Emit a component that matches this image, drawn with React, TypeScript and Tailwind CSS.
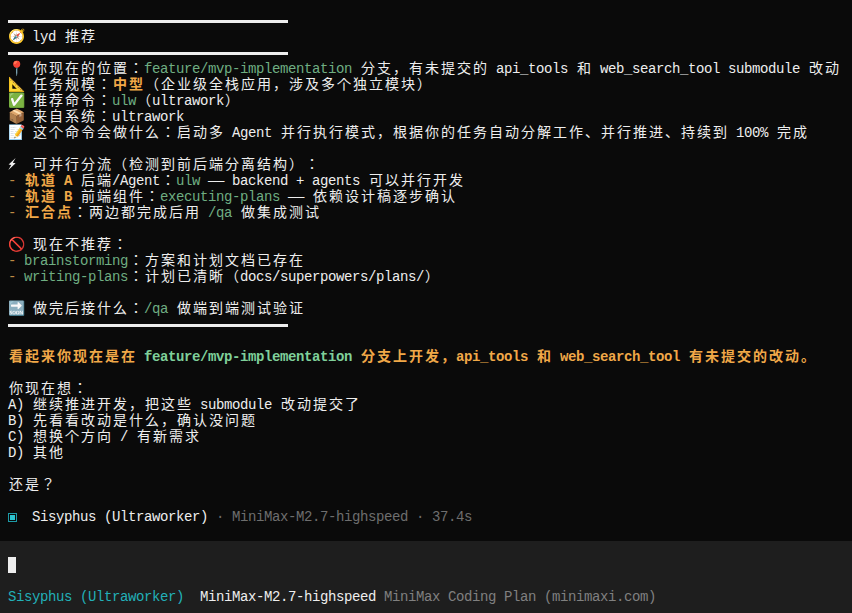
import React from "react";

type Seg = [string, string?];
const G = "text-[#6fae82]";
const O = "text-[#f0a848] font-bold";
const D = "text-[#c08a45]";
const isWide = (c: string) => {
  const p = c.codePointAt(0) || 0;
  return (p >= 0x2e80 && p <= 0x9fff) || (p >= 0xff00 && p <= 0xff60) || p >= 0x1f000 || p === 0x2705 || p === 0x3000;
};

function Text({ s }: { s: string }) {
  return (
    <>
      {Array.from(s).map((c, i) =>
        isWide(c) ? (
          <span key={i} className="inline-block w-4 text-center">{c}</span>
        ) : (
          <span key={i} className="inline-block w-2">{c === " " ? "\u00a0" : c}</span>
        )
      )}
    </>
  );
}

function Row({ segs = [], lead }: { segs?: Seg[]; lead?: React.ReactNode }) {
  return (
    <div className="flex h-4 leading-4 whitespace-nowrap">
      {lead}
      <div>
        {segs.map(([s, cls], i) => (
          <span key={i} className={cls}><Text s={s} /></span>
        ))}
      </div>
    </div>
  );
}

function Rule() {
  return (
    <div className="h-4 pt-[7px]">
      <div className="h-[3px] w-[280px] bg-[#eeeeee]" />
    </div>
  );
}

function Bolt() {
  return (
    <svg viewBox="0 0 8 12" className="w-2 h-3 mt-px shrink-0" fill="#eeeeee">
      <path d="M7.6 0 L0.6 6.4 L3.2 7 L0.4 12 L7.6 5.2 L4.8 4.8 Z" />
    </svg>
  );
}

function Square() {
  return (
    <div className="w-[9px] h-[9px] mt-1 mr-[-1px] border border-[#1c9aa6] p-px shrink-0">
      <div className="w-full h-full bg-[#2cc4d0]" />
    </div>
  );
}

type R = { segs?: Seg[]; lead?: React.ReactNode } | "rule";
const rows: R[] = [
  "rule",
  { segs: [["🧭 lyd 推荐"]] },
  "rule",
  { segs: [["📍 你现在的位置："], ["feature/mvp-implementation", G], [" 分支，有未提交的 api_tools 和 web_search_tool submodule 改动"]] },
  { segs: [["📐 任务规模："], ["中型", O], ["（企业级全栈应用，涉及多个独立模块）"]] },
  { segs: [["✅ 推荐命令："], ["ulw", G], ["（ultrawork）"]] },
  { segs: [["📦 来自系统：ultrawork"]] },
  { segs: [["📝 这个命令会做什么：启动多 Agent 并行执行模式，根据你的任务自动分解工作、并行推进、持续到 100% 完成"]] },
  {},
  { lead: <Bolt />, segs: [["  可并行分流（检测到前后端分离结构）："]] },
  { segs: [["- ", D], ["轨道 A", O], [" 后端/Agent："], ["ulw", G], [" —— backend + agents 可以并行开发"]] },
  { segs: [["- ", D], ["轨道 B", O], [" 前端组件："], ["executing-plans", G], [" —— 依赖设计稿逐步确认"]] },
  { segs: [["- ", D], ["汇合点", O], ["：两边都完成后用 "], ["/qa", G], [" 做集成测试"]] },
  {},
  { segs: [["🚫 现在不推荐："]] },
  { segs: [["- ", D], ["brainstorming", G], ["：方案和计划文档已存在"]] },
  { segs: [["- ", D], ["writing-plans", G], ["：计划已清晰（docs/superpowers/plans/）"]] },
  {},
  { segs: [["🔜 做完后接什么："], ["/qa", G], [" 做端到端测试验证"]] },
  "rule",
  {},
  { segs: [["看起来你现在是在 ", O], ["feature/mvp-implementation", "text-[#7fd09a] font-bold"], [" 分支上开发，api_tools 和 web_search_tool 有未提交的改动。", O]] },
  {},
  { segs: [["你现在想："]] },
  { segs: [["A) 继续推进开发，把这些 submodule 改动提交了"]] },
  { segs: [["B) 先看看改动是什么，确认没问题"]] },
  { segs: [["C) 想换个方向 / 有新需求"]] },
  { segs: [["D) 其他"]] },
  {},
  { segs: [["还是？"]] },
  {},
  { lead: <Square />, segs: [["  Sisyphus (Ultraworker)"], [" · MiniMax-M2.7-highspeed · 37.4s", "text-[#6e6e6e]"]] },
];

export default function App() {
  return (
    <div className="h-[613px] w-[852px] overflow-hidden flex flex-col bg-[#0a0a0a] text-[#eeeeee] text-[14px] font-['Liberation_Mono','Noto_Sans_CJK_JP',monospace]">
      <div className="flex-1 pl-2 pt-[13px]">
        {rows.map((r, i) => (r === "rule" ? <Rule key={i} /> : <Row key={i} segs={r.segs} lead={r.lead} />))}
      </div>
      <div className="h-[72px] bg-[#1e1e1e] pl-2 pt-4">
        <div className="w-2 h-4 bg-[#eeeeee]" />
        <div className="mt-4">
          <Row segs={[["Sisyphus (Ultraworker)", "text-[#22b0b8]"], ["  MiniMax-M2.7-highspeed"], [" MiniMax Coding Plan (minimaxi.com)", "text-[#808080]"]]} />
        </div>
      </div>
    </div>
  );
}
